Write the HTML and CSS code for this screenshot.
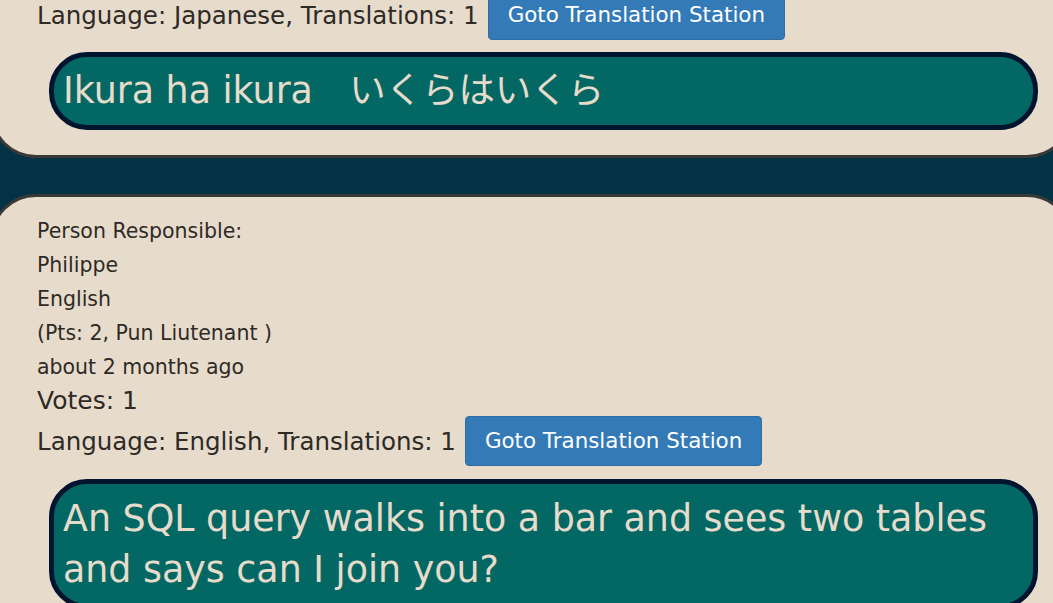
FILE: index.html
```html
<!DOCTYPE html>
<html>
<head>
<meta charset="utf-8">
<link rel="stylesheet" href="styles.css">
</head>
<body>
<div class="feed">
  <section class="card card-top">
    <div class="lang-row">
      <span class="lang-text">Language: Japanese, Translations: 1</span>
      <a class="btn">Goto Translation Station</a>
    </div>
    <div class="bubble single">Ikura ha ikura　いくらはいくら</div>
  </section>
  <section class="card card-bottom">
    <div class="meta">Person Responsible:</div>
    <div class="meta">Philippe</div>
    <div class="meta">English</div>
    <div class="meta">(Pts: 2, Pun Liutenant )</div>
    <div class="meta">about 2 months ago</div>
    <div class="votes">Votes: 1</div>
    <div class="lang-row">
      <span class="lang-text">Language: English, Translations: 1</span>
      <a class="btn">Goto Translation Station</a>
    </div>
    <div class="bubble">An SQL query walks into a bar and sees two tables and says can I join you?</div>
  </section>
</div>
</body>
</html>
```
FILE: styles.css
```css
html, body {
  margin: 0;
  padding: 0;
  background: #033247;
  overflow: hidden;
}
body {
  font-family: "DejaVu Sans", Verdana, "Noto Sans CJK JP", sans-serif;
  color: #2e2a26;
}
.feed {
  display: flex;
  flex-direction: column;
  gap: 36px;
  margin: -10px -20px 0 -10px;
}
.card {
  background: #e7dccb;
  border: 3px solid #3b3935;
  border-radius: 46px;
  padding-left: 44px;
  padding-right: 32px;
}
.card-top {
  border-top: none;
  border-top-left-radius: 0;
  border-top-right-radius: 0;
  padding-bottom: 25px;
}
.card-bottom {
  padding-top: 17px;
  padding-bottom: 40px;
}
.lang-row {
  display: flex;
  align-items: center;
  gap: 9px;
  font-size: 24.5px;
}
.card-bottom .lang-row {
  margin-top: -2px;
}
.btn {
  display: inline-block;
  background: #337ab7;
  color: #fff;
  font-size: 21.4px;
  padding: 11px 19px 12px;
  border-radius: 4px;
  border: 1px solid #2e6da4;
  line-height: 25px;
}
.meta {
  font-size: 20.5px;
  line-height: 34px;
}
.votes {
  font-size: 25px;
  line-height: 34px;
}
.bubble {
  margin: 13px 0 0 12px;
  background: #036864;
  border: 5px solid #00142f;
  border-radius: 38px;
  color: #e7dccb;
  font-size: 36.4px;
  line-height: 51px;
  padding: 9px 9px;
}
.card-top .bubble {
  margin-top: 12px;
  line-height: 50px;
}
```
